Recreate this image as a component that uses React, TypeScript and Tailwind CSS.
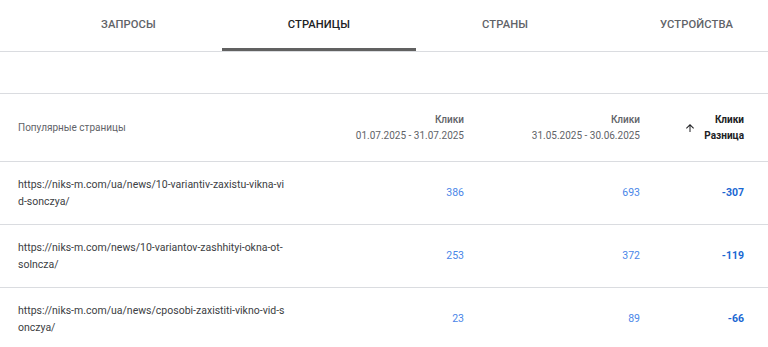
const tabs = ["Запросы", "Страницы", "Страны", "Устройства"];

const rows = [
  {
    url: ["https://niks-m.com/ua/news/10-variantiv-zaxistu-vikna-vi", "d-sonczya/"],
    cur: 386,
    prev: 693,
    diff: -307,
  },
  {
    url: ["https://niks-m.com/news/10-variantov-zashhityi-okna-ot-", "solncza/"],
    cur: 253,
    prev: 372,
    diff: -119,
  },
  {
    url: ["https://niks-m.com/ua/news/cposobi-zaxistiti-vikno-vid-s", "onczya/"],
    cur: 23,
    prev: 89,
    diff: -66,
  },
];

function ArrowUp() {
  return (
    <svg viewBox="0 0 24 24" className="w-[12px] h-[12px] fill-[#202124]">
      <path d="M4 12l1.41 1.41L11 7.83V20h2V7.83l5.58 5.59L20 12l-8-8-8 8z" />
    </svg>
  );
}

export default function App() {
  return (
    <div className="w-[768px] h-[347px] overflow-hidden bg-white font-['Roboto',sans-serif]">
      {/* tabs */}
      <div className="flex h-[52px] border-b border-[#dadce0] pl-[35px]">
        {tabs.map((t, i) => (
          <div
            key={t}
            className={
              "relative flex items-center px-[66px] text-[11.2px] font-medium uppercase tracking-[0.1px] " +
              (i === 1 ? "text-[#202124]" : "text-[#5f6368]")
            }
          >
            <span className="-mt-[1px]">{t}</span>
            {i === 1 && (
              <span className="absolute left-0 right-0 bottom-0 h-[3px] bg-[#616161]" />
            )}
          </div>
        ))}
      </div>

      <div className="h-[42px] border-b border-[#dadce0]" />

      {/* header */}
      <div className="flex items-center h-[68px] pl-[18px] pr-[24px] border-b border-[#dadce0] text-[10px] leading-[16px] text-[#5f6368]">
        <div className="w-[290px]">Популярные страницы</div>
        <div className="w-[156px] text-right">
          <div className="font-medium">Клики</div>
          <div>01.07.2025 - 31.07.2025</div>
        </div>
        <div className="w-[176px] text-right">
          <div className="font-medium">Клики</div>
          <div>31.05.2025 - 30.06.2025</div>
        </div>
        <div className="w-[104px] flex items-center justify-end gap-[8px] text-[#202124] font-bold">
          <ArrowUp />
          <div className="text-right">
            <div>Клики</div>
            <div>Разница</div>
          </div>
        </div>
      </div>

      {/* rows */}
      {rows.map((r) => (
        <div
          key={r.url[0]}
          className="flex items-center h-[63px] pl-[18px] pr-[24px] border-b border-[#dadce0] text-[10.5px]"
        >
          <div className="w-[290px] pr-[10px] leading-[17px] text-[#3c4043] whitespace-nowrap">
            {r.url[0]}
            <br />
            {r.url[1]}
          </div>
          <div className="w-[156px] text-right text-[#4a86e8]">{r.cur}</div>
          <div className="w-[176px] text-right text-[#4a86e8]">{r.prev}</div>
          <div className="w-[104px] text-right font-bold text-[#1967d2]">{r.diff}</div>
        </div>
      ))}
    </div>
  );
}
